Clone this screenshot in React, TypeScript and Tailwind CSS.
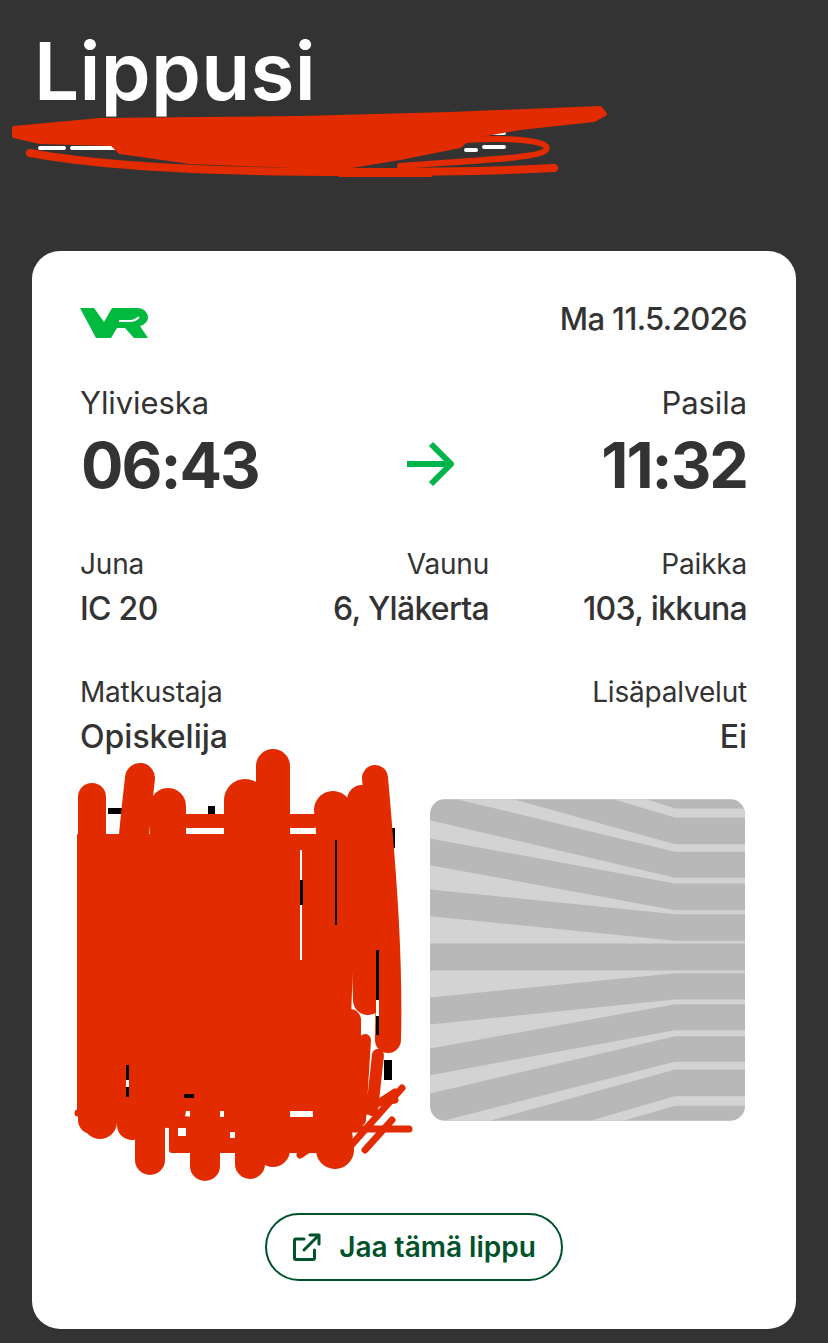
import React from "react";

const sans = "font-['Inter',sans-serif]";

const lightBands = [
  "765,55 975,55 975,82 765,82 580,27 680,27",
  "765,162 975,162 975,185 765,185 110,27 280,27",
  "765,263 975,263 975,280 765,280 30,145 30,90",
  "765,360 975,360 975,372 765,372 30,298 30,225",
  "765,452 975,452 975,460 30,460 30,378",
  "30,541 975,541 975,549 765,549 30,622",
  "765,628 975,628 975,642 765,642 30,775 30,703",
  "765,720 975,720 975,738 765,738 30,910 30,855",
  "765,815 975,815 975,838 765,838 210,992 70,992",
  "765,918 975,918 975,947 765,947 610,992 510,992",
];

const Field = ({ label, value, right, bold }: { label: string; value: string; right?: boolean; bold?: boolean }) => (
  <div className={right ? "text-right" : ""}>
    <div className="text-[28px] leading-[36px] tracking-[-0.2px] text-[#333]">{label}</div>
    <div className={`mt-[8px] text-[32px] font-medium leading-[38px] text-[#333] ${bold ? "tracking-[0px]" : "tracking-[-0.7px]"}`}>{value}</div>
  </div>
);

const VrLogo = () => (
  <svg width="68" height="31" viewBox="0 0 68 31" fill="#00b93f">
    <path d="M0 1H14L24 15L32 1H57C64 1 68 6 68 10C68 15 64 18 60 19L68 31H54L45 21H37L31 31H16Z" />
    <path d="M39 14H50C54 14 56 13 59 10" stroke="#fff" strokeWidth="2" fill="none" />
  </svg>
);

const Arrow = () => (
  <svg width="48" height="46" viewBox="0 0 48 46" fill="none" stroke="#00b54b" strokeWidth="6" strokeLinejoin="miter">
    <path d="M1 23H44M25 3L45 23L25 43" />
  </svg>
);

const ShareIcon = () => (
  <svg width="30" height="30" viewBox="0 0 30 30" fill="none" stroke="#00522b" strokeWidth="3" strokeLinecap="round" strokeLinejoin="round">
    <path d="M12 7H4a1.500 1.500 0 0 0-1.500 1.500V26a1.500 1.500 0 0 0 1.500 1.500H21a1.500 1.500 0 0 0 1.500-1.500V18" />
    <path d="M12 18L27 3M18 3H27V12" />
  </svg>
);

// scribble over the passenger's name and the QR code
const HeaderScribble = () => (
  <svg className="absolute left-0 top-0" width="620" height="190" fill="none" stroke="#e32b00" strokeLinecap="round" strokeLinejoin="round">
    <path d="M40 148H64M72 148H116M466 150H476M484 147H504M492 133H504" stroke="#fff" strokeWidth="4" />
    <path
      d="M14 128L100 120L300 118L450 114L600 108L605 114L594 120L520 128L470 137L460 146L400 158L340 168L190 162L120 152L112 144L40 142L14 136Z"
      fill="#e32b00"
      strokeWidth="4"
    />
    <path d="M465 140C520 137 552 142 546 150C540 158 480 160 400 166" strokeWidth="6" />
    <path d="M30 153C100 166 200 172 350 172C430 172 500 171 554 168" strokeWidth="8" />
    <path d="M340 174H430" strokeWidth="6" />
  </svg>
);

const QrScribble = () => (
  <svg className="absolute left-0 top-0" width="828" height="1343" fill="none" stroke="#e32b00" strokeLinecap="round" strokeLinejoin="round">
    <g fill="#000" stroke="none">
      <rect x="108" y="808" width="16" height="6" />
      <rect x="208" y="806" width="7" height="8" />
      <rect x="293" y="814" width="22" height="5" />
      <rect x="392" y="828" width="3" height="20" />
      <rect x="384" y="1060" width="8" height="20" />
    </g>
    <path d="M78 835H350V1110H78Z" fill="#e32b00" strokeWidth="2" />
    <path d="M92 797V1120" strokeWidth="28" />
    <path d="M140 778C126 900 120 1000 132 1125" strokeWidth="30" />
    <path d="M168 806V1110" strokeWidth="36" />
    <path d="M245 800V1130" strokeWidth="42" />
    <path d="M273 766V1150" strokeWidth="34" />
    <path d="M333 810C345 900 322 1050 335 1150" strokeWidth="38" />
    <path d="M362 800L368 1000" strokeWidth="30" />
    <path d="M375 778C384 880 390 960 388 1040" strokeWidth="26" />
    <path d="M183 821H313" strokeWidth="14" />
    <path d="M172 1120H345V1150H172Z" fill="#e32b00" strokeWidth="6" />
    <path d="M150 1110V1160M205 1110V1166M250 1110V1164" strokeWidth="30" />
    <path d="M100 1105V1122" strokeWidth="34" />
    <path d="M350 1020V1120" strokeWidth="22" />
    <path d="M365 1040L360 1120M378 1055L372 1110" strokeWidth="12" />
    <path d="M78 1113L220 1122M267 1129H409M300 1155L395 1092M340 1158L402 1088M365 1150L392 1120M340 1110L395 1100" strokeWidth="7" />
    <g stroke="none">
      <rect x="300" y="850" width="2" height="110" fill="#fff" />
      <rect x="300" y="880" width="3" height="25" fill="#000" />
      <rect x="335" y="840" width="2" height="85" fill="#000" />
      <rect x="376" y="950" width="3" height="85" fill="#000" />
      <rect x="376" y="1000" width="3" height="16" fill="#fff" />
      <rect x="126" y="1065" width="3" height="32" fill="#000" />
      <rect x="126" y="1080" width="3" height="7" fill="#fff" />
      <rect x="184" y="1094" width="10" height="4" fill="#000" />
      <rect x="178" y="1128" width="8" height="8" fill="#fff" />
      <rect x="230" y="1132" width="5" height="6" fill="#fff" />
    </g>
  </svg>
);

export default function App() {
  return (
    <div className={`relative h-[1343px] w-[828px] overflow-hidden bg-[#333333] ${sans}`}>
      <header className="h-[251px] pl-[34px] pt-[21px]">
        <h1 className="text-[80px] font-semibold leading-[100px] tracking-[0.3px] text-white">Lippusi</h1>
      </header>
      <HeaderScribble />

      <main className="ml-[32px] h-[1078px] w-[764px] rounded-[28px] bg-white pl-[48px] pr-[49px] pt-[44px]">
        <div className="flex items-start justify-between">
          <div className="pt-[12px]"><VrLogo /></div>
          <div className="text-[31px] font-medium leading-[48px] tracking-[-0.6px] text-[#333]">Ma 11.5.2026</div>
        </div>

        <div className="mt-[41px] flex justify-between">
          <div>
            <div className="text-[31px] leading-[38px] tracking-[-0.1px] text-[#333]">Ylivieska</div>
            <div className="ml-[1px] mt-[4px] text-[63px] font-bold leading-[78px] tracking-[-2px] text-[#333]">06:43</div>
          </div>
          <div className="pt-[57px]"><Arrow /></div>
          <div className="text-right">
            <div className="text-[31px] leading-[38px] tracking-[-0.1px] text-[#333]">Pasila</div>
            <div className="mt-[4px] text-[63px] font-bold leading-[78px] tracking-[-2px] text-[#333]">11:32</div>
          </div>
        </div>

        <div className="mt-[42px] grid grid-cols-[250px_159px_1fr]">
          <Field label="Juna" value="IC 20" />
          <Field label="Vaunu" value="6, Yläkerta" right />
          <Field label="Paikka" value="103, ikkuna" right />
        </div>

        <div className="mt-[46px] flex justify-between">
          <Field label="Matkustaja" value="Opiskelija" bold />
          <Field label="Lisäpalvelut" value="Ei" right bold />
        </div>

        <div className="mt-[43px] flex justify-end pr-[2px]">
          <svg className="block rounded-[15px]" width="315" height="322" viewBox="30 27 945 965">
            <rect x="30" y="27" width="945" height="965" fill="#b8b8b8" />
            {lightBands.map((p) => (
              <polygon key={p} points={p} fill="#d3d3d3" />
            ))}
          </svg>
        </div>

        <div className="mt-[92px] flex justify-center pl-[1px]">
          <button className="flex h-[68px] w-[298px] items-center justify-center gap-[17px] rounded-full border-2 border-[#00522b] text-[28px] font-semibold text-[#00522b]">
            <ShareIcon />
            Jaa tämä lippu
          </button>
        </div>
      </main>
      <QrScribble />
    </div>
  );
}
